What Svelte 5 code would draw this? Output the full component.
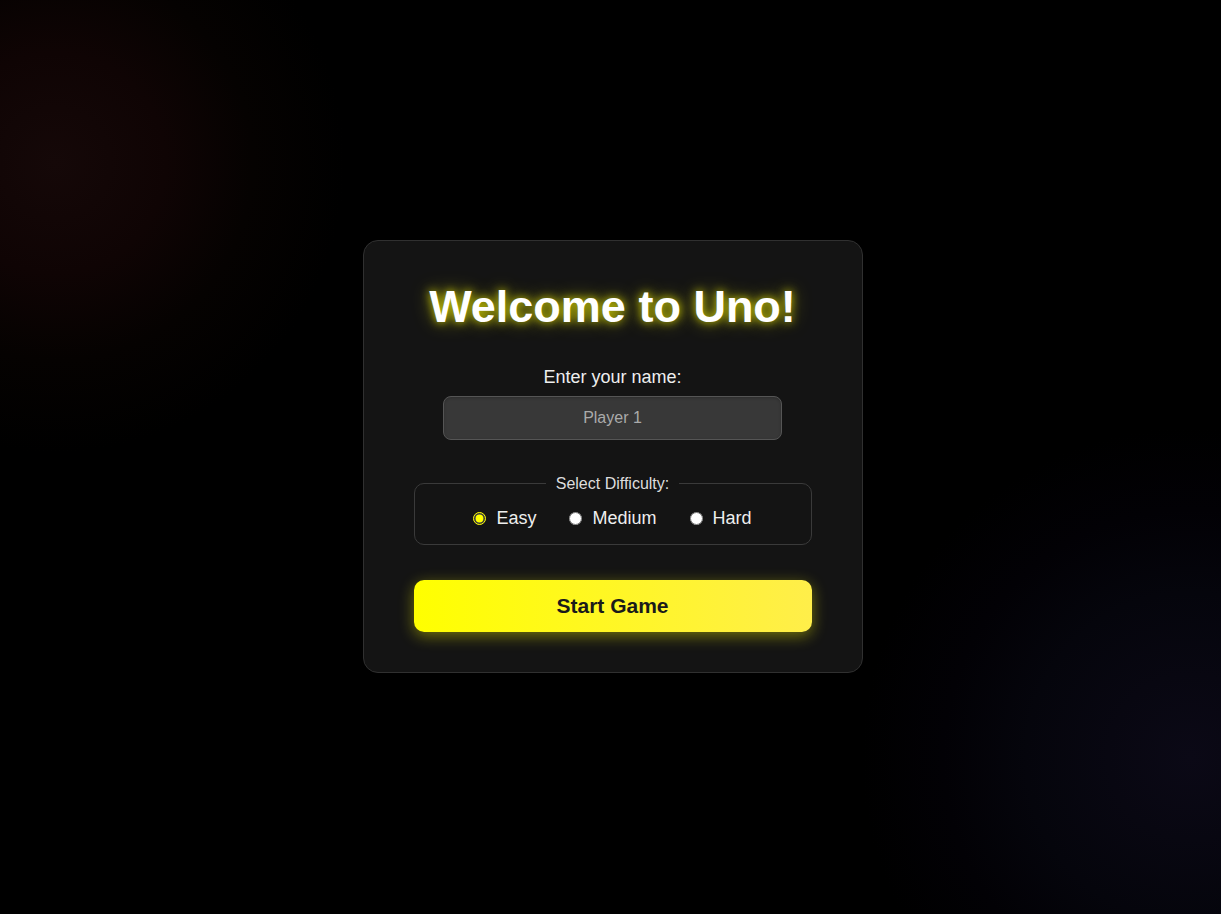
<script>
  const levels = ['Easy', 'Medium', 'Hard'];
  let name = $state('');
  let difficulty = $state('Easy');

  function start(event) {
    event.preventDefault();
  }
</script>

<main>
  <form class="card" onsubmit={start}>
    <h1>Welcome to Uno!</h1>
    <label class="name-label" for="player-name">Enter your name:</label>
    <input id="player-name" class="name" type="text" placeholder="Player 1" bind:value={name} />
    <fieldset>
      <legend>Select Difficulty:</legend>
      <div class="levels">
        {#each levels as level}
          <label class="level">
            <input type="radio" name="difficulty" value={level} bind:group={difficulty} />
            <span>{level}</span>
          </label>
        {/each}
      </div>
    </fieldset>
    <button type="submit">Start Game</button>
  </form>
</main>

<style>
  :global(body) {
    margin: 0;
    background: #000;
  }

  main {
    box-sizing: border-box;
    min-height: 100vh;
    padding: 20px 16px 22px 20px;
    display: flex;
    align-items: center;
    justify-content: center;
    font-family: "Liberation Sans", Arial, sans-serif;
    color: #eee;
    background:
      radial-gradient(circle 290px at 55px 163px, rgb(21, 8, 8), rgb(15, 4, 4) 38%, rgb(5, 2, 1) 68%, rgb(0, 0, 0, 0)),
      radial-gradient(circle 330px at calc(100% - 30px) calc(100% - 157px), rgb(11, 9, 22), rgb(5, 5, 12) 50%, rgb(2, 1, 5) 75%, rgb(0, 0, 0, 0)),
      #000;
  }

  .card {
    box-sizing: border-box;
    width: 100%;
    max-width: 500px;
    padding: 40px 50px;
    display: flex;
    flex-direction: column;
    align-items: center;
    background: #141414;
    border: 1px solid #303030;
    border-radius: 15px;
  }

  h1 {
    margin: 0 0 34px;
    font-size: 45px;
    line-height: 52px;
    text-align: center;
    color: #fff;
    text-shadow: 0 0 10px rgba(255, 255, 0, 0.8), 0 0 20px rgba(255, 255, 0, 0.4);
  }

  .name-label {
    margin-bottom: 8px;
    font-size: 18px;
    line-height: 21px;
  }

  .name {
    box-sizing: border-box;
    width: 85%;
    height: 44px;
    margin-bottom: 35px;
    padding: 12px;
    font: inherit;
    font-size: 16px;
    text-align: center;
    color: #fff;
    background: #383838;
    border: 1px solid #555;
    border-radius: 8px;
    box-shadow: inset 0 1px 3px rgba(0, 0, 0, 0.2);
  }

  .name::placeholder {
    color: #aaa;
  }

  fieldset {
    box-sizing: border-box;
    width: 100%;
    min-width: 0;
    margin: 0 0 35px;
    padding: 15px;
    border: 1px solid #3a3a3a;
    border-radius: 10px;
  }

  legend {
    margin: 0 auto;
    padding: 0 10px;
    font-size: 16px;
    line-height: 18px;
    color: #ddd;
  }

  .levels {
    display: flex;
    flex-wrap: wrap;
    justify-content: center;
    gap: 33px;
  }

  .level {
    display: flex;
    align-items: center;
    gap: 10px;
    font-size: 18px;
    line-height: 21px;
    cursor: pointer;
  }

  .level input {
    width: 13px;
    height: 13px;
    margin: 0;
    accent-color: #ff0;
  }

  button {
    width: 100%;
    padding: 14px;
    font: inherit;
    font-size: 21px;
    line-height: 24px;
    font-weight: bold;
    color: #1a1a1a;
    background: linear-gradient(90deg, #ff0, #ffee4a);
    border: 0;
    border-radius: 10px;
    box-shadow: 0 4px 15px rgba(255, 255, 0, 0.4);
    cursor: pointer;
  }
</style>
